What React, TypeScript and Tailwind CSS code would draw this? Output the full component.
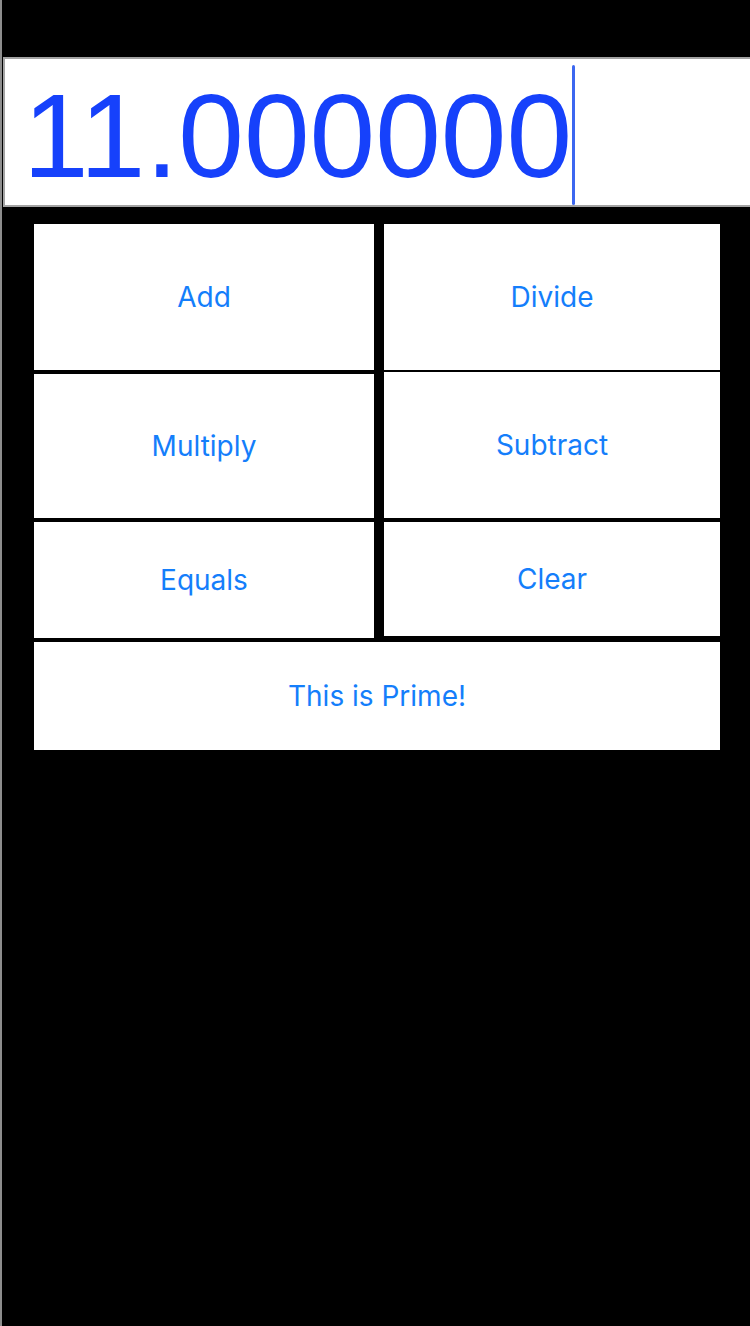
export default function App() {
  const btn =
    "flex items-center justify-center bg-white text-[#147efb] text-[28px] font-[family-name:Inter,sans-serif]";

  return (
    <div className="w-[750px] h-[1326px] bg-black border-l-2 border-[#8d8d8d] pt-[57px] overflow-hidden">
      {/* Display field */}
      <div className="ml-px h-[150px] flex items-start bg-white border-2 border-r-0 border-[#a3a3a3]">
        <span className="pl-[18px] pt-[18px] text-[118px] leading-none text-[#1641fb] font-['Liberation_Sans',Arial,sans-serif]">
          11.000000
        </span>
        <span className="mt-[6px] w-[3px] h-[140px] rounded-full bg-[#3c67f0]" />
      </div>

      {/* Buttons */}
      <div className="ml-8 mt-[17px] w-[686px] flex flex-col gap-1">
        <div className="flex gap-[10px]">
          <div className="w-[340px] flex flex-col gap-1">
            <button className={`${btn} h-[146px]`}>Add</button>
            <button className={`${btn} h-[144px]`}>Multiply</button>
            <button className={`${btn} h-[116px]`}>Equals</button>
          </div>
          <div className="w-[336px] flex flex-col">
            <button className={`${btn} h-[146px]`}>Divide</button>
            <button className={`${btn} h-[146px] mt-[2px]`}>Subtract</button>
            <button className={`${btn} h-[114px] mt-1`}>Clear</button>
          </div>
        </div>
        <button className={`${btn} h-[108px]`}>This is Prime!</button>
      </div>
    </div>
  );
}
